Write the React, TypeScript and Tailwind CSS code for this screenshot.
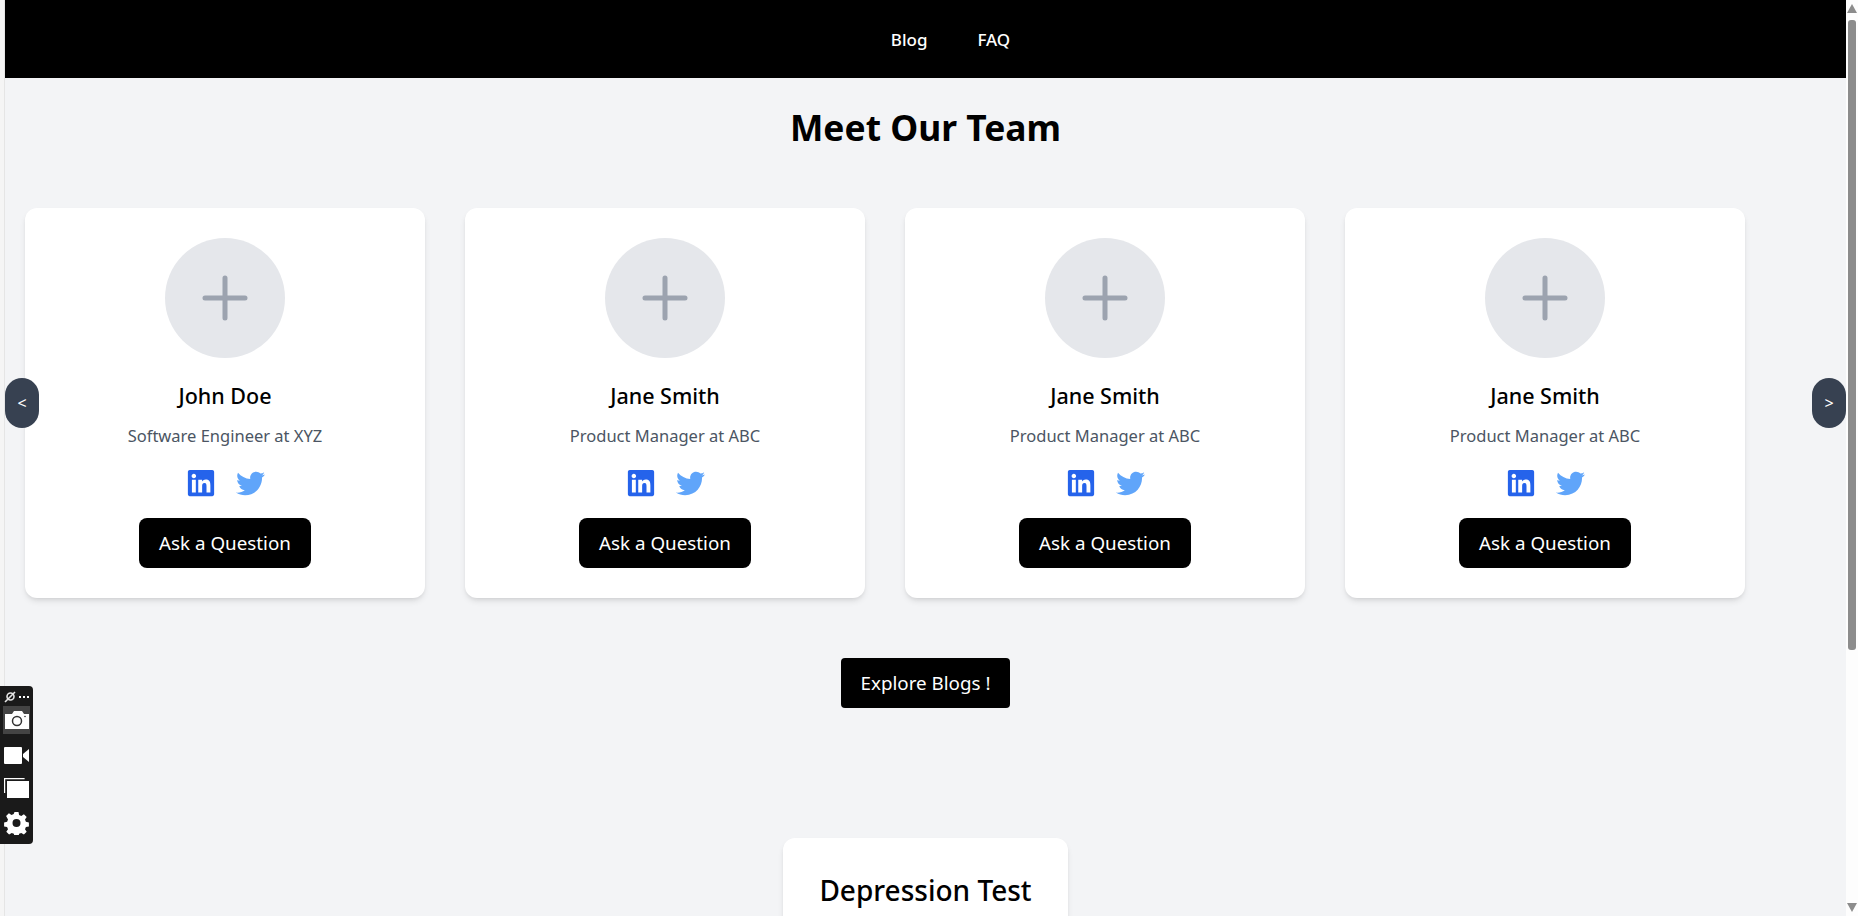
import React from "react";
import { FaLinkedin, FaTwitter } from "react-icons/fa";

const members = [
  { name: "John Doe", role: "Software Engineer at XYZ" },
  { name: "Jane Smith", role: "Product Manager at ABC" },
  { name: "Jane Smith", role: "Product Manager at ABC" },
  { name: "Jane Smith", role: "Product Manager at ABC" },
];

function TeamCard({ name, role }: { name: string; role: string }) {
  return (
    <div className="flex h-[390px] w-[400px] shrink-0 flex-col items-center rounded-xl bg-white pt-[30px] shadow-md">
      <div className="flex h-[120px] w-[120px] items-center justify-center rounded-full bg-[#e5e7eb]">
        <svg className="h-[60px] w-[60px] text-[#9ca3af]" viewBox="0 0 24 24" fill="none" stroke="currentColor" strokeWidth="2" strokeLinecap="round">
          <path d="M12 4v16m8-8H4" />
        </svg>
      </div>
      <h3 className="mt-[23px] text-[21.5px] leading-[30px] font-medium text-black">{name}</h3>
      <p className="mt-[13px] text-[16.5px] leading-[24px] text-[#4b5563]">{role}</p>
      <div className="mt-[20px] flex items-center gap-[20px]">
        <FaLinkedin className="text-[#2563eb]" size={30} />
        <FaTwitter className="text-[#60a5fa]" size={29} />
      </div>
      <button className="mt-[20px] h-[50px] w-[172px] rounded-lg bg-black text-[18.8px] text-white">Ask a Question</button>
    </div>
  );
}

function ToolStrip() {
  return (
    <div className="absolute top-[686px] left-0 flex h-[158px] w-[33px] flex-col items-center rounded-r bg-[#1a1a1a] pt-[4px] text-white">
      <div className="flex h-[14px] w-full items-center justify-center gap-[3px]">
        <svg className="h-[12px] w-[12px]" viewBox="0 0 12 12" fill="none" stroke="#e5e5e5" strokeWidth="1.6">
          <circle cx="6.5" cy="5.500" r="3.500" />
          <path d="M1 11 11 1" />
        </svg>
        <span className="flex gap-[2px]">
          <i className="h-[2px] w-[2px] bg-white" />
          <i className="h-[2px] w-[2px] bg-white" />
          <i className="h-[2px] w-[2px] bg-white" />
        </span>
      </div>
      <div className="mt-[2px] flex h-[28px] w-[27px] items-center justify-center bg-[#444]">
        <svg className="h-[22px] w-[26px]" viewBox="0 0 26 22">
          <path d="M1 5h7l2-3h8l2 3h5v15H1z" fill="#fff" />
          <circle cx="13" cy="12" r="4.5" fill="none" stroke="#333" strokeWidth="1.5" />
          <circle cx="21" cy="7.5" r=".8" fill="#333" />
        </svg>
      </div>
      <svg className="mt-[13px] h-[17px] w-[25px]" viewBox="0 0 25 17" fill="#fff">
        <rect x="0" y="0" width="18" height="17" rx="1" />
        <path d="M19 7l6-5v13l-6-5z" />
      </svg>
      <svg className="mt-[14px] h-[20px] w-[25px]" viewBox="0 0 25 20">
        <path d="M.6 15V.6h20" fill="none" stroke="#fff" strokeWidth="1.2" />
        <rect x="3" y="3" width="22" height="17" fill="#fff" />
      </svg>
      <svg className="mt-[13px] h-[24px] w-[25px]" viewBox="0 0 24 24" fill="#fff">
        <path fillRule="evenodd" d="M10 1h4l.6 3 2.2.9 2.6-1.700 2.800 2.800-1.700 2.600.9 2.200 3 .6v4l-3 .6-.9 2.200 1.700 2.600-2.800 2.800-2.600-1.700-2.200.9-.6 3h-4l-.6-3-2.200-.9-2.600 1.700-2.800-2.800 1.700-2.600-.9-2.200-3-.6v-4l3-.6.9-2.200L1.600 5l2.800-2.800L7 3.900l2.200-.9zM12 8a4 4 0 1 0 0 8 4 4 0 0 0 0-8z" />
      </svg>
    </div>
  );
}

export default function App() {
  return (
    <div className="relative flex h-screen w-full overflow-hidden bg-[#fafafa] font-['Noto_Sans',sans-serif]">
      <div className="w-[5px] shrink-0 border-r border-[#e5e5e5] bg-[#f5f5f5]" />
      <main className="relative flex min-w-0 flex-1 flex-col items-center overflow-hidden bg-[#f3f4f6]">
        <nav className="flex h-[78px] w-full shrink-0 items-center justify-center gap-[50px] bg-black pt-[1px] pl-[50px] text-[17px] font-medium text-white">
          <a>Blog</a>
          <a>FAQ</a>
        </nav>
        <h1 className="mt-[24px] text-[35.4px] leading-[50px] font-bold text-black">Meet Our Team</h1>
        <div className="mt-[56px] flex w-full gap-[40px] pl-[20px]">
          {members.map((m, i) => (
            <TeamCard key={i} name={m.name} role={m.role} />
          ))}
        </div>
        <button className="absolute top-[378px] left-0 h-[50px] w-[34px] rounded-full bg-[#374151] text-[16px] text-white">&lt;</button>
        <button className="absolute top-[378px] right-0 h-[50px] w-[34px] rounded-full bg-[#374151] text-[16px] text-white">&gt;</button>
        <button className="mt-[60px] h-[50px] w-[169px] shrink-0 rounded bg-black text-[18.8px] text-white">Explore Blogs !</button>
        <div className="mt-[130px] flex h-[200px] w-[285px] shrink-0 justify-center rounded-xl bg-white pt-[32px] shadow-md">
          <h2 className="text-[28px] leading-[40px] font-medium text-black">Depression Test</h2>
        </div>
      </main>
      <div className="flex w-[12px] shrink-0 flex-col items-center bg-[#fdfdfd]">
        <svg className="mt-[4px] h-[9px] w-[10px]" viewBox="0 0 10 9" fill="#8c8c8c"><path d="M5 0l5 9H0z" /></svg>
        <div className="mt-[7px] h-[630px] w-[8px] rounded-[3px] bg-[#8c8c8c]" />
        <div className="flex-1" />
        <svg className="mb-[4px] h-[9px] w-[10px]" viewBox="0 0 10 9" fill="#8c8c8c"><path d="M5 9L10 0H0z" /></svg>
      </div>
      <ToolStrip />
    </div>
  );
}
